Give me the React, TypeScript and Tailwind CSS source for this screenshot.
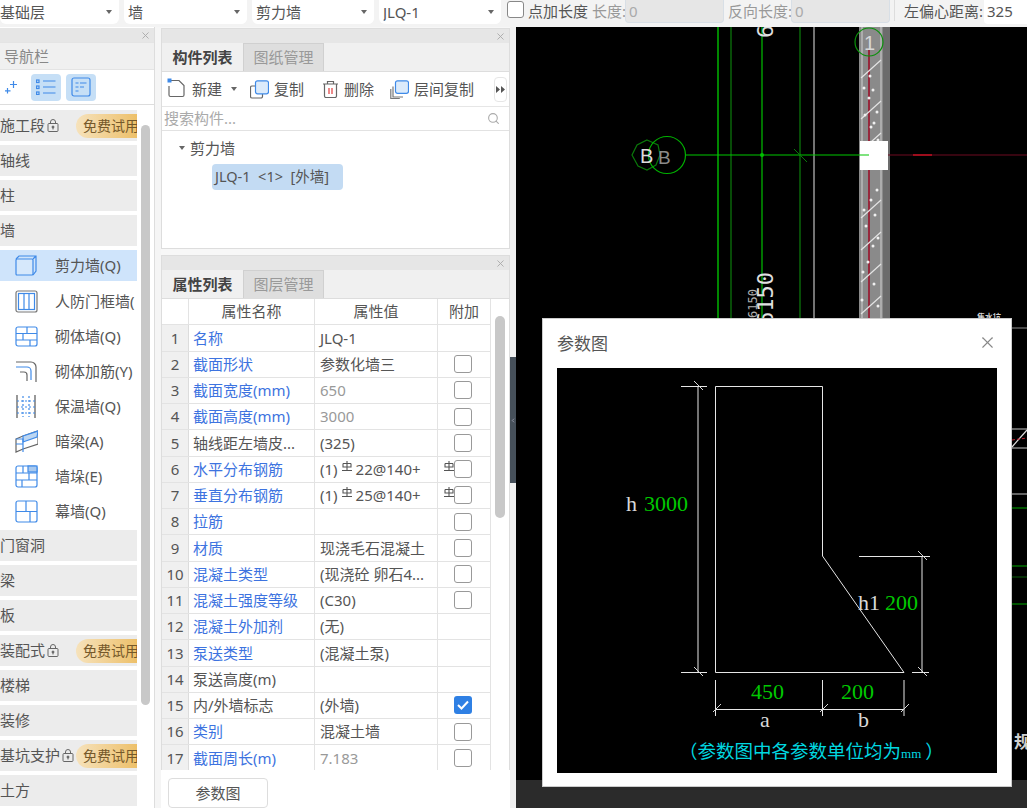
import type { ReactNode } from "react";
import { ChevronLeft, Search, X } from "lucide-react";

const cjk = "[font-family:'Noto_Sans','Noto_Sans_CJK_SC',sans-serif]";

function Caret() {
    return <span className="w-0 h-0 border-x-[3.5px] border-x-transparent border-t-[4px] border-t-[#666] shrink-0" />;
}

function Select({ label, width }: { label: string, width: string }) {
    return (
        <div className={`${width} h-[24px] bg-white rounded-b-md flex items-center justify-between pr-[7px] text-[15px] text-[#555] overflow-hidden`}>
            <span>{label}</span>
            <Caret />
        </div>
    );
}

function Lock() {
    return (
        <svg width="12" height="13" viewBox="0 0 12 13" fill="none" stroke="#666" strokeWidth="1" className="ml-[2px] shrink-0">
            <rect x="1" y="4.5" width="10" height="8" rx="1" />
            <path d="M3.5 4.5V3a2.5 2.5 0 0 1 5 0v1.5" />
            <circle cx="6" cy="8" r="1" fill="#666" />
            <path d="M6 8v2.5" />
        </svg>
    );
}

function NavBar({ label, locked }: { label: string, locked?: boolean }) {
    return (
        <div className="h-[31px] bg-[#ececec] flex items-center text-[15px] text-[#555] shrink-0">
            <span className="whitespace-nowrap">{label}</span>
            {locked && <Lock />}
            {locked && (
                <span className="ml-auto w-[61px] h-[24px] pl-[7px] flex items-center rounded-l-full bg-gradient-to-r from-[#f6e2bb] to-[#edc069] text-[14px] text-[#75582a] whitespace-nowrap overflow-hidden shrink-0">免费试用</span>
            )}
        </div>
    );
}

const B = "#3f8ae8";

const wallIcons: ReactNode[] = [
    <g fill="none" stroke={B} strokeWidth="1.2"><rect x="1" y="5" width="17" height="16" rx="1" fill="#d6e8fb" /><path d="M1 5l3-3h17v15l-3 4M18 5l3-3" /></g>,
    <g fill="none" strokeWidth="1.2"><rect x="1" y="1" width="21" height="21" rx="2" stroke="#777" /><rect x="3.5" y="3.5" width="16" height="16" stroke={B} /><path d="M9 3.5v16M14 3.5v16" stroke={B} /></g>,
    <g fill="none" stroke={B} strokeWidth="1.2"><rect x="1" y="2" width="21" height="19" rx="2" /><path d="M1 8.5h21M1 15h21M12 2v6.5M8 8.5V15M15 15v6" /></g>,
    <g fill="none" strokeWidth="1.2"><path d="M1 2h15a5 5 0 0 1 5 5v15" stroke="#666" /><path d="M1 7h11a4 4 0 0 1 4 4v9" stroke={B} /><path d="M5 12h4a3 3 0 0 1 3 3v6" stroke="#666" /></g>,
    <g fill="none" strokeWidth="1.2"><path d="M2 0v23M20 0v23" stroke="#555" /><path d="M8 1v21M14 1v21M2 6h18M2 12h18M2 18h18" stroke={B} strokeDasharray="2 2" /></g>,
    <g fill="none" strokeWidth="1.2"><path d="M1 9l7-3 15-5v13l-15 5-7 3z" stroke="#666" /><path d="M8 6l15-5-1 6-14 5z" fill="#bcd6f2" stroke={B} /><path d="M1 9h7v13M1 14h7" stroke={B} /></g>,
    <g fill="none" stroke={B} strokeWidth="1.2"><rect x="1" y="1" width="21" height="21" rx="2" /><rect x="13" y="1" width="9" height="6" fill="#a9c9ee" /><path d="M1 8h21M1 15h21M8 1v7M14 8v7M7 15v7" /></g>,
    <g fill="none" stroke={B} strokeWidth="1.2"><rect x="1" y="1" width="21" height="21" rx="2" /><path d="M1 11.5h21M11 1v10.5M15 11.5V22" /></g>,
];

const wallItems = ["剪力墙(Q)", "人防门框墙(", "砌体墙(Q)", "砌体加筋(Y)", "保温墙(Q)", "暗梁(A)", "墙垛(E)", "幕墙(Q)"];

function NavPanel() {
    return (
        <div className="w-[155px] h-full bg-white border-r border-[#ddd] flex flex-col overflow-hidden">
            <div className="h-[14px] mt-[1px] bg-[#e6e6e6] flex items-center justify-end pr-[3px] shrink-0">
                <X size={11} className="text-[#aaa]" />
            </div>
            <div className="h-[28px] bg-[#f0f0f0] border-y border-[#e4e4e4] pl-[4px] flex items-center text-[15px] text-[#888] shrink-0">导航栏</div>
            <div className="h-[35px] border-b border-[#ddd] flex items-center shrink-0">
                <svg width="14" height="14" viewBox="0 0 14 14" stroke={B} strokeWidth="1.2" className="ml-[4px]">
                    <path d="M9.5 1v7M6 4.5h7M3.500 8v5.500M1 10.800h5.500" />
                </svg>
                <span className="ml-[13px] w-[30px] h-[27px] rounded-[4px] bg-[#c6dff6] flex items-center justify-center">
                    <svg width="20" height="16" viewBox="0 0 20 16" fill="none" stroke={B} strokeWidth="1.2">
                        <rect x="0.500" y="1" width="2.500" height="2.500" /><rect x="0.500" y="7" width="2.500" height="2.500" /><rect x="0.500" y="13" width="2.500" height="2.500" />
                        <path d="M7 2h12.500M7 8h12.500M7 14h12.500" />
                    </svg>
                </span>
                <span className="ml-[5px] w-[30px] h-[27px] rounded-[4px] bg-[#c6dff6] flex items-center justify-center">
                    <svg width="20" height="20" viewBox="0 0 20 20" fill="none" stroke={B} strokeWidth="1.2">
                        <rect x="1" y="1" width="18" height="18" rx="2" />
                        <path d="M4.500 6h3M9 6h6.500M4.500 10h3M9 10h4M4.500 14h3" />
                    </svg>
                </span>
            </div>
            <div className="flex-1 min-h-0 flex pt-[5px]">
                <div className="w-[137px] flex flex-col gap-[4px] overflow-hidden">
                    <NavBar label="施工段" locked />
                    <NavBar label="轴线" />
                    <NavBar label="柱" />
                    <NavBar label="墙" />
                    <div className="flex flex-col h-[276px] shrink-0">
                        {wallItems.map((item, i) => (
                            <div key={item} className={`flex items-start text-[15px] text-[#555] whitespace-nowrap overflow-hidden shrink-0 ${i == 0 ? "bg-[#cfe4fb] h-[31px] mb-[4px]" : "h-[35px]"}`}>
                                <svg width="23" height="23" viewBox="0 0 23 23" className={`ml-[15px] shrink-0 ${i == 0 ? "mt-[4px]" : "mt-[5px]"}`}>{wallIcons[i]}</svg>
                                <span className={`ml-[17px] ${i == 0 ? "mt-[4px]" : "mt-[5px]"}`}>{item}</span>
                            </div>
                        ))}
                    </div>
                    <NavBar label="门窗洞" />
                    <NavBar label="梁" />
                    <NavBar label="板" />
                    <NavBar label="装配式" locked />
                    <NavBar label="楼梯" />
                    <NavBar label="装修" />
                    <NavBar label="基坑支护" locked />
                    <NavBar label="土方" />
                </div>
                <div className="ml-[4px] mt-[15px] w-[9px] h-[580px] rounded-full bg-[#c8c8c8]" />
            </div>
        </div>
    );
}

function PanelTitle() {
    return (
        <div className="h-[14px] bg-[#e6e6e6] flex items-center justify-end pr-[3px] shrink-0">
            <X size={11} className="text-[#aaa]" />
        </div>
    );
}

function Tabs({ active, other }: { active: string, other: string }) {
    return (
        <div className="h-[29px] bg-[#f0f0f0] border-b border-[#ddd] flex shrink-0 text-[15px]">
            <div className="w-[81px] flex items-center justify-center font-bold text-[#444]">{active}</div>
            <div className="w-[81px] flex items-center justify-center bg-[#dedede] border border-[#d0d0d0] border-b-0 text-[#999]">{other}</div>
        </div>
    );
}

function ToolButton({ icon, label, width }: { icon: ReactNode, label: string, width: string }) {
    return (
        <div className={`${width} flex items-center shrink-0 text-[15px] text-[#555]`}>
            {icon}
            <span className="ml-[5px] whitespace-nowrap">{label}</span>
        </div>
    );
}

function ListPanel() {
    return (
        <div className="h-[221px] mt-[1px] border border-[#ddd] bg-white flex flex-col shrink-0">
            <PanelTitle />
            <Tabs active="构件列表" other="图纸管理" />
            <div className="h-[35px] border-b border-[#e6e6e6] flex items-center pl-[5px] shrink-0">
                <ToolButton width="w-[64px]" label="新建" icon={
                    <svg width="20" height="20" viewBox="0 0 20 20" fill="none" stroke="#666" strokeWidth="1.200" className="-mt-[2px]">
                        <path d="M4 2.500h8l5 5v9.500a1.500 1.500 0 0 1-1.500 1.500h-12a1.500 1.500 0 0 1-1.500-1.500v-9" />
                        <rect x="0.500" y="0.500" width="4" height="4" fill={B} stroke="none" />
                    </svg>
                } />
                <Caret />
                <span className="w-[13px] shrink-0" />
                <ToolButton width="w-[71px]" label="复制" icon={
                    <svg width="19" height="19" viewBox="0 0 19 19" fill="none" strokeWidth="1.200">
                        <path d="M5 6H2a1.500 1.500 0 0 0-1.500 1.500v9A1.500 1.500 0 0 0 2 18h9a1.500 1.500 0 0 0 1.500-1.500V14" stroke="#666" />
                        <rect x="5.500" y="0.800" width="13" height="13" rx="2" stroke={B} fill="#dcebfb" />
                    </svg>
                } />
                <ToolButton width="w-[69px]" label="删除" icon={
                    <svg width="17" height="18" viewBox="0 0 17 18" fill="none" stroke="#666" strokeWidth="1.200" className="ml-[1px]">
                        <path d="M1 4h15M5.500 4V1.500h6V4M2.500 4v12a1.500 1.500 0 0 0 1.500 1.500h9a1.500 1.500 0 0 0 1.500-1.500V4" />
                        <path d="M7 8v6M10 8v6" stroke="#e23c3c" />
                    </svg>
                } />
                <ToolButton width="w-[104px]" label="层间复制" icon={
                    <svg width="19" height="19" viewBox="0 0 19 19" fill="none" strokeWidth="1.200">
                        <path d="M3 6.500v10.500h10M.8 9v9.500h9" stroke="#777" />
                        <rect x="5.500" y="0.800" width="13" height="12.500" rx="2" stroke={B} fill="#dcebfb" />
                    </svg>
                } />
                <span className="w-[13px] h-[25px] rounded-[4px] border border-[#e6e6e6] flex items-center justify-center shrink-0">
                    <svg width="9" height="7" viewBox="0 0 9 7" fill="#555"><path d="M0 0l4 3.500L0 7zM5 0l4 3.500L5 7z" /></svg>
                </span>
            </div>
            <div className="h-[24px] border-b border-[#e2e2e2] flex items-center justify-between pl-[2px] pr-[9px] text-[15px] text-[#aaa] shrink-0">
                <span>搜索构件...</span>
                <Search size={13} strokeWidth={2} />
            </div>
            <div className="flex-1 pt-[5px] text-[15px] text-[#555]">
                <div className="h-[24px] flex items-center pl-[17px]">
                    <Caret />
                    <span className="ml-[5px]">剪力墙</span>
                </div>
                <div className="ml-[50px] mt-[4px] w-[131px] h-[26px] rounded-[4px] bg-[#c3dbf3] pl-[3px] flex items-center whitespace-pre text-[14.500px]">JLQ-1  &lt;1&gt;  [外墙]</div>
            </div>
        </div>
    );
}

function Rebar() {
    return (
        <svg width="10" height="11" viewBox="0 0 10 11" fill="none" stroke="#555" strokeWidth="1.100" className="inline-block align-[3px] mx-[1px]">
            <path d="M1 2.500v3.500h8V2.500M1 2.500h8M5 0v9M0 9.500h10" />
        </svg>
    );
}

type Prop = { name: string, value: ReactNode, link?: boolean, muted?: boolean, box?: "off" | "on" | "rebar" };

const props: Prop[] = [
    { name: "名称", value: "JLQ-1", link: true },
    { name: "截面形状", value: "参数化墙三", link: true, box: "off" },
    { name: "截面宽度(mm)", value: "650", link: true, muted: true, box: "off" },
    { name: "截面高度(mm)", value: "3000", link: true, muted: true, box: "off" },
    { name: "轴线距左墙皮...", value: "(325)", box: "off" },
    { name: "水平分布钢筋", value: <>(1)<span className="mx-[3px]"><Rebar /></span>22@140+</>, link: true, box: "rebar" },
    { name: "垂直分布钢筋", value: <>(1)<span className="mx-[3px]"><Rebar /></span>25@140+</>, link: true, box: "rebar" },
    { name: "拉筋", value: "", link: true, box: "off" },
    { name: "材质", value: "现浇毛石混凝土", link: true, box: "off" },
    { name: "混凝土类型", value: "(现浇砼 卵石4...", link: true, box: "off" },
    { name: "混凝土强度等级", value: "(C30)", link: true, box: "off" },
    { name: "混凝土外加剂", value: "(无)", link: true },
    { name: "泵送类型", value: "(混凝土泵)", link: true },
    { name: "泵送高度(m)", value: "" },
    { name: "内/外墙标志", value: "(外墙)", box: "on" },
    { name: "类别", value: "混凝土墙", link: true, box: "off" },
    { name: "截面周长(m)", value: "7.183", link: true, muted: true, box: "off" },
];

function Check({ on }: { on?: boolean }) {
    if (on) {
        return (
            <span className="w-[18px] h-[18px] rounded-[3px] bg-[#2f80e4] flex items-center justify-center shrink-0">
                <svg width="12" height="10" viewBox="0 0 12 10" fill="none" stroke="white" strokeWidth="2"><path d="M1 5l3.500 3.500L11 1.500" /></svg>
            </span>
        );
    }
    return <span className="w-[18px] h-[18px] rounded-[3px] border border-[#999] bg-white shrink-0" />;
}

function PropTable() {
    return (
        <div className="flex-1 min-h-0 flex bg-white overflow-hidden text-[15px]">
            <div className="w-[329px] shrink-0 border-r border-[#e3e3e3]">
                <div className="h-[26.250px] grid grid-cols-[27px_126px_123px_52px] border-b border-[#e3e3e3] text-[#555]">
                    <div className="border-r border-[#e3e3e3]" />
                    <div className="border-r border-[#e3e3e3] flex items-center justify-center">属性名称</div>
                    <div className="border-r border-[#e3e3e3] flex items-center justify-center">属性值</div>
                    <div className="flex items-center justify-center">附加</div>
                </div>
                {props.map((p, i) => (
                    <div key={p.name} className="h-[26.250px] grid grid-cols-[27px_126px_123px_52px] border-b border-[#e3e3e3]">
                        <div className="bg-[#f0f0f0] border-r border-[#dcdcdc] flex items-center justify-center text-[#555]">{i + 1}</div>
                        <div className={`border-r border-[#e3e3e3] pl-[4px] flex items-center whitespace-nowrap overflow-hidden ${p.link ? "text-[#3d73e0]" : "text-[#555]"}`}>{p.name}</div>
                        <div className={`border-r border-[#e3e3e3] pl-[5px] whitespace-nowrap overflow-hidden flex items-center ${p.muted ? "text-[#999]" : "text-[#555]"}`}><span>{p.value}</span></div>
                        <div className="flex items-center pl-[16px]">
                            {p.box == "rebar" && <span className="-ml-[11px] w-[11px] leading-none"><Rebar /></span>}
                            {p.box && <Check on={p.box == "on"} />}
                        </div>
                    </div>
                ))}
            </div>
            <div className="flex-1 flex justify-center pt-[17px]">
                <div className="w-[10px] h-[202px] rounded-full bg-[#c8c8c8]" />
            </div>
        </div>
    );
}

function AttrPanel() {
    return (
        <div className="flex-1 min-h-0 mt-[6px] border-x border-t border-[#ddd] flex flex-col">
            <PanelTitle />
            <Tabs active="属性列表" other="图层管理" />
            <PropTable />
        </div>
    );
}

function MiddlePanel() {
    return (
        <div className="w-[349px] ml-[6px] h-full flex flex-col shrink-0 bg-[#f7f7f7]">
            <ListPanel />
            <AttrPanel />
            <div className="h-[38px] pt-[8px] pl-[7px] bg-white shrink-0">
                <div className="w-[100px] h-[30px] border border-[#ddd] rounded-[4px] bg-white flex items-center justify-center text-[15px] text-[#555]">参数图</div>
            </div>
        </div>
    );
}

const hatchY = [60, 101, 133, 200, 232, 264, 296];
const dots = [[870, 76], [873, 90], [865, 115], [871, 127], [874, 123], [878, 140], [871, 200], [875, 215], [866, 226], [873, 246], [868, 262], [874, 284], [862, 300], [878, 306], [869, 98], [877, 112], [864, 88], [877, 190], [864, 210], [878, 238], [863, 272]];

function CadCanvas() {
    const sep = "font-['Liberation_Sans']";
    return (
        <svg className="w-full h-full block" viewBox="516 27 511 753" preserveAspectRatio="none">
            <rect x="516" y="27" width="511" height="753" fill="#000" />
            <path d="M718 27V780" stroke="#00b400" strokeWidth="1.500" />
            <path d="M731 27V780" stroke="#0a640a" strokeWidth="1.500" />
            <path d="M762 27V780" stroke="#00c000" strokeWidth="1.200" />
            <path d="M800 27V780" stroke="#0a640a" strokeWidth="1.500" />
            <path d="M814 27V780" stroke="#9a9a9a" strokeWidth="1.500" />
            <rect x="859" y="27" width="24" height="753" fill="#8a8a8a" />
            <rect x="883" y="27" width="7" height="753" fill="#6c6c6c" />
            <path d="M862 27V780M881 27V780" stroke="#d0d0d0" strokeWidth="1" />
            <path d="M869 50V780" stroke="#96283c" strokeWidth="2" />
            {hatchY.map((y) => <path key={y} d={`M861 ${y + 18}L881 ${y}`} stroke="#e4e4e4" strokeWidth="1.200" />)}
            {dots.map(([x, y]) => <circle key={`${x}-${y}`} cx={x} cy={y} r="1.500" fill="#f0f0f0" />)}
            <rect x="860" y="141" width="28" height="29" fill="#fff" />
            <path d="M685 155H869" stroke="#00c800" strokeWidth="1.200" />
            <path d="M888 155H1027" stroke="#6e0a20" strokeWidth="1.200" />
            <path d="M913 155H932" stroke="#c01020" strokeWidth="1.500" />
            <path d="M794 149l13 13" stroke="#0a7a0a" strokeWidth="1" />
            <circle cx="762" cy="155" r="2" fill="#00c000" />
            <polygon points="647,140 658,145 660,155 656,165 647,170 638,166 632,155 637,145" fill="none" stroke="#0a780a" strokeWidth="1.200" />
            <circle cx="667" cy="155" r="18.500" fill="none" stroke="#00b000" strokeWidth="1.200" />
            <text x="640" y="163" fontSize="20" fill="#dcdcdc" className={sep}>B</text>
            <text x="658" y="164" fontSize="19" fill="#8a8a8a" className={sep}>B</text>
            <circle cx="869" cy="42" r="14" fill="none" stroke="#0a900a" strokeWidth="1.200" />
            <text x="864" y="50" fontSize="20" fill="#d8d8d8" className={sep}>1</text>
            <text x="0" y="0" fontSize="22" fill="#e0e0e0" transform="translate(773 38) rotate(-90)" className="font-['DejaVu_Sans_Mono']">6</text>
            <text x="0" y="0" fontSize="22" fill="#e0e0e0" transform="translate(773 325) rotate(-90)" className="font-['DejaVu_Sans_Mono']">6150</text>
            <text x="0" y="0" fontSize="12" fill="#b0b0b0" transform="translate(757 318) rotate(-90)" className="font-['DejaVu_Sans_Mono']">6150</text>
            <path d="M1012 328H1027" stroke="#777" strokeWidth="1.200" />
            <path d="M1012 429H1027M1012 448H1027M1012 494H1027" stroke="#c8c8c8" strokeWidth="1.200" />
            <path d="M1012 447l15-17" stroke="#e0e0e0" strokeWidth="1.200" />
            <path d="M1012 440L1027 438" stroke="#c02030" strokeWidth="1" strokeDasharray="3 2" />
            <path d="M1012 508H1027M1012 566H1027M1012 604H1027" stroke="#00a800" strokeWidth="1.200" />
            <path d="M1012 577H1027" stroke="#0a500a" strokeWidth="1.200" />
            <text x="1014" y="748" fontSize="17" fontWeight="700" fill="#d0d0d0" className={cjk}>规</text>
            <text x="977" y="320" fontSize="8" fontWeight="700" fill="#d0d0d0" className={cjk}>集水坑</text>
        </svg>
    );
}

function DimTick({ x, y }: { x: number, y: number }) {
    return <path d={`M${x - 4} ${y - 5}L${x + 5} ${y + 4}`} stroke="#d8d8d8" strokeWidth="1" />;
}

function ParamDrawing() {
    const serif = "font-['Liberation_Serif']";
    return (
        <svg className="w-[440px] h-[405px] block" viewBox="557 368 440 405">
            <rect x="557" y="368" width="440" height="405" fill="#000" />
            <g fill="none" stroke="#e6e6e6" strokeWidth="1">
                <path d="M715.500 386.500H822.500V556L904 672.500H715.500Z" />
                <path d="M681 386.500H707M698 386.500V672.500M681 672.500H707" />
                <path d="M859 556.500H930M922 556.500V672.500M912 672.500H929" />
                <path d="M715.500 680V716M822.500 680V716M904 680V716M715.500 709.500H904" />
            </g>
            <DimTick x={698} y={386} />
            <DimTick x={698} y={672} />
            <DimTick x={922} y={556} />
            <DimTick x={922} y={672} />
            <path d="M713 712L721 704M820 712L828 704M901 712L909 704" stroke="#d8d8d8" strokeWidth="1" />
            <text x="626" y="511" fontSize="22" fill="#d8d8d8" className={serif}>h</text>
            <text x="644" y="511" fontSize="22" fill="#00c800" className={serif}>3000</text>
            <text x="858" y="610" fontSize="22" fill="#d8d8d8" className={serif}>h1</text>
            <text x="885" y="610" fontSize="22" fill="#00c800" className={serif}>200</text>
            <text x="751" y="699" fontSize="22" fill="#00c800" className={serif}>450</text>
            <text x="841" y="699" fontSize="22" fill="#00c800" className={serif}>200</text>
            <text x="760" y="727" fontSize="22" fill="#d8d8d8" className={serif}>a</text>
            <text x="858" y="727" fontSize="22" fill="#d8d8d8" className={serif}>b</text>
            <text x="679" y="758" fontSize="18.500" fill="#00d8e0" className={cjk}>（参数图中各参数单位均为<tspan fontSize="13" className={serif}>mm</tspan><tspan dx="4">）</tspan></text>
        </svg>
    );
}

function ParamDialog() {
    return (
        <div className="absolute left-[542px] top-[318px] w-[470px] h-[469px] bg-white border border-[#ccc] px-[14px] flex flex-col">
            <div className="h-[49px] flex items-center justify-between pr-[1px] text-[17px] text-[#555] shrink-0">
                <span>参数图</span>
                <X size={19} strokeWidth={1.400} className="text-[#888] -mr-[1px] -mt-[3px]" />
            </div>
            <ParamDrawing />
        </div>
    );
}

export default function App() {
    return (
        <div className={`relative w-[1027px] h-[808px] overflow-hidden flex flex-col bg-[#f5f5f5] ${cjk}`}>
            <div className="h-[27px] bg-[#f3f3f3] flex items-start shrink-0 text-[15px]">
                <Select label="基础层" width="w-[119px]" />
                <div className="w-[5px] shrink-0" />
                <div className="pl-[4px] w-[123px] bg-white rounded-b-md shrink-0"><Select label="墙" width="w-full" /></div>
                <div className="w-[5px] shrink-0" />
                <div className="pl-[4px] w-[122px] bg-white rounded-b-md shrink-0"><Select label="剪力墙" width="w-full" /></div>
                <div className="w-[5px] shrink-0" />
                <div className="pl-[4px] w-[122px] bg-white rounded-b-md shrink-0"><Select label="JLQ-1" width="w-full" /></div>
                <span className="ml-[6px] mt-[1px] w-[17px] h-[17px] rounded-[3px] border border-[#888] bg-white shrink-0" />
                <span className="ml-[4px] w-[60px] text-[#555] whitespace-nowrap shrink-0">点加长度</span>
                <span className="ml-[4px] w-[33px] text-[#999] whitespace-nowrap shrink-0">长度:</span>
                <span className="w-[99px] h-[23px] bg-[#e6e6e6] rounded-b-[4px] border-x border-b border-[#d8dfe6] pl-[3px] text-[#aaa] shrink-0">0</span>
                <span className="ml-[4px] w-[63px] text-[#999] whitespace-nowrap shrink-0">反向长度:</span>
                <span className="w-[99px] h-[23px] bg-[#e6e6e6] rounded-b-[4px] border-x border-b border-[#d8dfe6] pl-[3px] text-[#aaa] shrink-0">0</span>
                <span className="ml-[4px] w-px h-[21px] bg-[#ddd] shrink-0" />
                <span className="ml-[9px] w-[80px] text-[#555] whitespace-nowrap shrink-0">左偏心距离:</span>
                <span className="flex-1 h-[24px] bg-white rounded-bl-[4px] pl-[3px] text-[#555]">325</span>
            </div>
            <div className="flex-1 min-h-0 flex">
                <NavPanel />
                <MiddlePanel />
                <div className="relative w-[6px] bg-[#f0f0f0] shrink-0">
                    <div className="absolute top-[330px] left-0 w-[6px] h-[126px] bg-[#46505a] flex items-center justify-center">
                        <ChevronLeft size={7} strokeWidth={3} className="text-[#aab]" />
                    </div>
                </div>
                <div className="flex-1 flex flex-col min-w-0">
                    <div className="h-[753px] shrink-0"><CadCanvas /></div>
                    <div className="flex-1 bg-[#2b2b2b]" />
                </div>
            </div>
            <ParamDialog />
        </div>
    );
}
